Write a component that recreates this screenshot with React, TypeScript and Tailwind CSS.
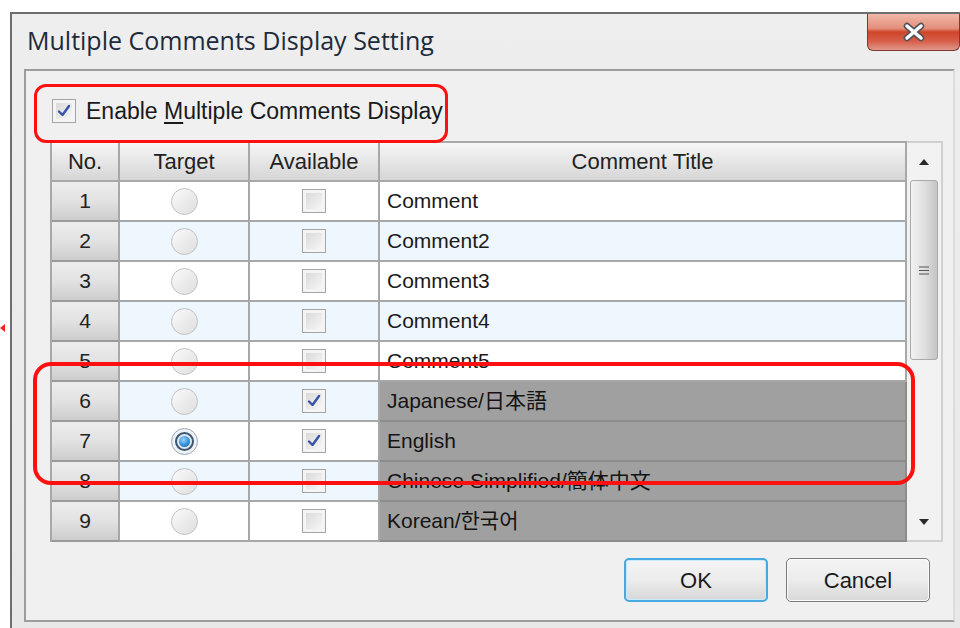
import React from 'react';

type Row = {
  no: number;
  title: string;
  target?: boolean;
  available?: boolean;
  shaded?: boolean;
};

const rows: Row[] = [
  { no: 1, title: 'Comment' },
  { no: 2, title: 'Comment2' },
  { no: 3, title: 'Comment3' },
  { no: 4, title: 'Comment4' },
  { no: 5, title: 'Comment5' },
  { no: 6, title: 'Japanese/日本語', available: true, shaded: true },
  { no: 7, title: 'English', target: true, available: true, shaded: true },
  { no: 8, title: 'Chinese Simplified/簡体中文', shaded: true },
  { no: 9, title: 'Korean/한국어', shaded: true },
];

function Radio({ checked }: { checked?: boolean }) {
  if (checked) {
    return (
      <div className="w-[27px] h-[27px] rounded-full border border-[#9aa7b5] bg-[#eef2f6] flex items-center justify-center">
        <div className="w-[19px] h-[19px] rounded-full border-2 border-[#3f5670] flex items-center justify-center bg-[#dfe6ee]">
          <div className="w-[11px] h-[11px] rounded-full bg-[radial-gradient(circle_at_40%_35%,#9ad6ff,#2a8ad6_60%,#13548f)]" />
        </div>
      </div>
    );
  }
  return (
    <div className="w-[27px] h-[27px] rounded-full border border-[#c2c2c2] bg-linear-to-br from-[#fafafa] to-[#dedede]" />
  );
}

function Check({ checked }: { checked?: boolean }) {
  return (
    <div className="w-[24px] h-[24px] border border-[#a4a4a4] bg-[#f4f4f4] p-[3px]">
      <div className="w-full h-full bg-linear-to-br from-[#dadada] to-[#f6f6f6] flex items-center justify-center">
        {checked && (
          <svg width="14" height="14" viewBox="0 0 14 14">
            <path d="M2 7.5 L5.5 11 L12 2" fill="none" stroke="#3553a8" strokeWidth="2.4" strokeLinecap="round" strokeLinejoin="round" />
          </svg>
        )}
      </div>
    </div>
  );
}

function Triangle({ up }: { up?: boolean }) {
  return (
    <svg width="12" height="8" viewBox="0 0 12 8">
      <path d={up ? 'M1 7 L6 1 L11 7 Z' : 'M1 1 L6 7 L11 1 Z'} fill="#2a2a2a" />
    </svg>
  );
}

function WinButton({ label, focused }: { label: string; focused?: boolean }) {
  return (
    <button
      className={
        focused
          ? 'w-[144px] h-[44px] rounded-[5px] border-2 border-[#48a8e0] bg-linear-to-b from-[#f4f4f4] via-[#ececec] to-[#d8d8d8] text-[22px] text-[#1a1a1a] shadow-[inset_0_0_0_1px_#c9ecfb]'
          : 'w-[144px] h-[44px] rounded-[5px] border border-[#7a7a7a] bg-linear-to-b from-[#f4f4f4] via-[#ececec] to-[#d8d8d8] text-[22px] text-[#1a1a1a] shadow-[inset_0_0_0_1px_#fbfbfb]'
      }
    >
      {label}
    </button>
  );
}

export default function App() {
  return (
    <div className="relative w-[960px] h-[628px] overflow-hidden bg-white font-['Liberation_Sans','Noto_Sans_CJK_JP',sans-serif] text-[#1a1a1a]">
      {/* window frame */}
      <div className="ml-[10px] mt-[12px] h-[640px] border-l-2 border-t-2 border-[#6e6e6e] bg-linear-to-b from-[#eeeeee] to-[#e8e8e8] flex flex-col">
        {/* caption */}
        <div className="h-[55px] flex items-start justify-between pl-[15px]">
          <div className="pt-[11px] text-[25px] leading-[30px] text-[#1d2b3c] font-['Open_Sans',sans-serif]">
            Multiple Comments Display Setting
          </div>
          <div className="w-[93px] h-[37px] rounded-b-[6px] border border-t-0 border-[#7a3a30] bg-[linear-gradient(#f0b8aa,#e38e7a_40%,#cf4429_50%,#d65e48_75%,#e0978a)] flex items-center justify-center">
            <svg width="26" height="20" viewBox="0 0 26 20">
              <path d="M6 4 L20 16 M20 4 L6 16" stroke="#50505c" strokeWidth="6.5" strokeLinecap="round" />
              <path d="M6 4 L20 16 M20 4 L6 16" stroke="#ffffff" strokeWidth="3.5" strokeLinecap="round" />
            </svg>
          </div>
        </div>

        {/* client area */}
        <div className="ml-[12px] mr-[5px] h-[553px] border-2 border-[#9c9c9c] border-r-[#dcdcdc] bg-[#f0f0f0] pt-[27px] pl-[24px]">
          <label className="ml-[2px] flex items-center gap-[10px] h-[26px] text-[23px] text-[#1a1a1a]">
            <Check checked />
            <span>
              Enable <span className="underline underline-offset-[3px]">M</span>ultiple Comments Display
            </span>
          </label>

          <div className="mt-[17px] flex">
            <div className="border-l-2 border-t-2 border-[#a8a8a8] grid grid-cols-[68px_130px_130px_527px]">
              {['No.', 'Target', 'Available', 'Comment Title'].map((h) => (
                <div
                  key={h}
                  className="h-[39px] border-r-2 border-b-2 border-[#a8a8a8] bg-linear-to-b from-[#f6f6f6] to-[#d6d6d6] flex items-center justify-center text-[22px] text-[#222]"
                >
                  {h}
                </div>
              ))}
              {rows.map((r) => {
                const band = r.no % 2 === 0 ? 'bg-[#eef6fe]' : 'bg-white';
                return (
                  <React.Fragment key={r.no}>
                    <div className="h-[40px] border-r-2 border-b-2 border-[#a8a8a8] border-b-[#9a9a9a] bg-linear-to-b from-[#ededed] via-[#e2e2e2] to-[#cdcdcd] flex items-center justify-center text-[21px] text-[#222]">
                      {r.no}
                    </div>
                    <div className={`h-[40px] border-r-2 border-b-2 border-[#a8a8a8] ${band} flex items-center justify-center`}>
                      <Radio checked={r.target} />
                    </div>
                    <div className={`h-[40px] border-r-2 border-b-2 border-[#a8a8a8] ${band} flex items-center justify-center`}>
                      <Check checked={r.available} />
                    </div>
                    <div
                      className={`h-[40px] border-r-2 border-b-2 pl-[7px] flex items-center text-[21px] whitespace-nowrap ${
                        r.shaded ? 'bg-[#a0a0a0] border-[#8c8c8c] text-[#141414]' : `${band} border-[#a8a8a8]`
                      }`}
                    >
                      {r.title}
                    </div>
                  </React.Fragment>
                );
              })}
            </div>

            {/* vertical scrollbar */}
            <div className="w-[36px] border-t-2 border-r-2 border-b-2 border-[#d0d0d0] bg-[#f2f2f2] flex flex-col items-center">
              <div className="h-[37px] flex items-center justify-center">
                <Triangle up />
              </div>
              <div className="w-[28px] h-[180px] rounded-[3px] border border-[#a9a9a9] bg-linear-to-r from-[#f2f2f2] via-[#e0e0e0] to-[#c4c4c4] flex items-center justify-center">
                <svg width="10" height="9" viewBox="0 0 10 9">
                  <path d="M0 1 H10 M0 4.5 H10 M0 8 H10" stroke="#555" strokeWidth="1.2" />
                </svg>
              </div>
              <div className="flex-1" />
              <div className="h-[37px] flex items-center justify-center">
                <Triangle />
              </div>
            </div>
          </div>

          <div className="mt-[16px] mr-[23px] flex justify-end gap-[18px]">
            <WinButton label="OK" focused />
            <WinButton label="Cancel" />
          </div>
        </div>
      </div>

      {/* red callouts drawn over the dialog */}
      <div className="absolute left-[34px] top-[84px] w-[414px] h-[59px] rounded-[12px] border-[3px] border-[#ff1010]" />
      <div className="absolute left-[33px] top-[362px] w-[882px] h-[123px] rounded-[18px] border-[4px] border-[#ff1010]" />
      <div className="absolute left-0 top-[324px] w-0 h-0 border-y-[4px] border-y-transparent border-r-[5px] border-r-[#ff2020]" />
    </div>
  );
}
